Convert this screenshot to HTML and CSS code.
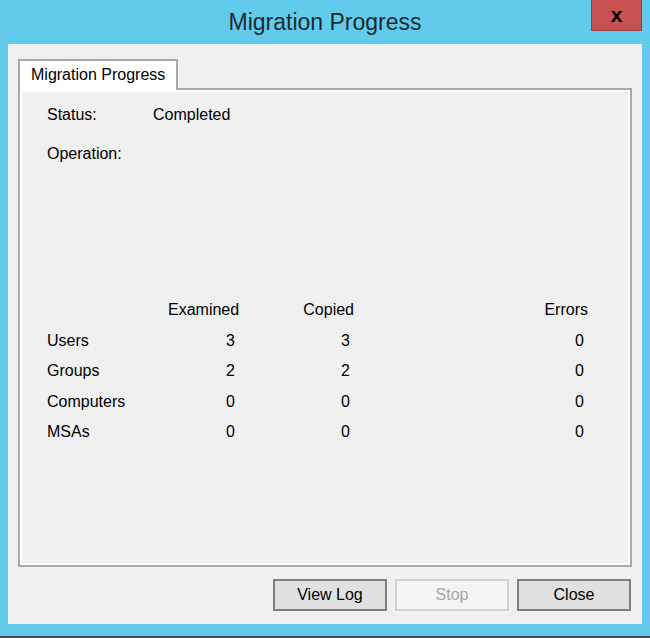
FILE: index.html
```html
<!DOCTYPE html>
<html lang="en">
<head>
    <meta charset="UTF-8">
    <title>Migration Progress</title>
    <link rel="stylesheet" href="styles.css">
</head>
<body>
    <div class="window">
        <div class="titlebar">
            <span class="title">Migration Progress</span>
            <div class="close-btn">x</div>
        </div>

        <div class="client">
            <div class="tabs">
                <div class="tab">Migration Progress</div>
            </div>
            <div class="panel">
                <div class="field">
                    <span class="field-label">Status:</span>
                    <span>Completed</span>
                </div>
                <div class="field operation">
                    <span class="field-label">Operation:</span>
                </div>

                <div class="stats">
                    <span></span>
                    <span class="head">Examined</span>
                    <span class="head">Copied</span>
                    <span class="head">Errors</span>

                    <span>Users</span>
                    <span class="num">3</span>
                    <span class="num">3</span>
                    <span class="num">0</span>

                    <span>Groups</span>
                    <span class="num">2</span>
                    <span class="num">2</span>
                    <span class="num">0</span>

                    <span>Computers</span>
                    <span class="num">0</span>
                    <span class="num">0</span>
                    <span class="num">0</span>

                    <span>MSAs</span>
                    <span class="num">0</span>
                    <span class="num">0</span>
                    <span class="num">0</span>
                </div>
            </div>

            <div class="buttons">
                <button class="btn">View Log</button>
                <button class="btn" disabled>Stop</button>
                <button class="btn">Close</button>
            </div>
        </div>
    </div>
    <div class="taskbar-edge"></div>
</body>
</html>
```

FILE: styles.css
```css
body {
    margin: 0;
    background: #62cbec;
    font-family: "Liberation Sans", Arial, sans-serif;
    font-size: 16px;
    color: #000;
}

.window {
    height: 636px;
    display: flex;
    flex-direction: column;
}

.titlebar {
    height: 44px;
    position: relative;
    display: flex;
    justify-content: center;
}

.title {
    font-size: 23px;
    line-height: 44px;
    color: #1a2a30;
}

.close-btn {
    position: absolute;
    top: 0;
    right: 8px;
    width: 49px;
    height: 30px;
    background: #c75050;
    border: 1px solid #9e3b3b;
    border-top: none;
    font-weight: bold;
    font-size: 21px;
    line-height: 29px;
    text-align: center;
    color: #000;
}

.client {
    margin: 0 8px;
    height: 580px;
    background: #f0f0f0;
    border-top: 1px solid #e8f4f8;
    box-sizing: border-box;
    padding: 14px 10px 0 10px;
    display: flex;
    flex-direction: column;
}

/* onglet */
.tabs {
    display: flex;
    height: 29px;
}

.tab {
    position: relative;
    z-index: 1;
    width: 160px;
    height: 31px;
    box-sizing: border-box;
    background: #fff;
    border: 2px solid #a9a9a9;
    border-bottom: none;
    padding-left: 11px;
    line-height: 28px;
}

.panel {
    height: 479px;
    box-sizing: border-box;
    border: 2px solid #a9a9a9;
    box-shadow: inset 0 0 0 2px #fff;
    padding: 15px 0 0 27px;
}

.field {
    display: flex;
    line-height: 20px;
}

.field-label {
    width: 106px;
}

.operation {
    margin-top: 19px;
}

.stats {
    margin-top: 131px;
    display: grid;
    grid-template-columns: 121px 71px 115px 234px;
    grid-auto-rows: 30.5px;
    align-items: center;
}

.head {
    text-align: right;
}

.num {
    text-align: right;
    padding-right: 4px;
}

.buttons {
    display: flex;
    justify-content: flex-end;
    gap: 8px;
    padding: 12px 1px 0 0;
}

.btn {
    width: 114px;
    height: 32px;
    font-family: "Liberation Sans", Arial, sans-serif;
    font-size: 16px;
    color: #000;
    background: #e1e1e1;
    border: 2px solid #7f7f7f;
    padding: 0;
}

.btn:disabled {
    background: #f4f4f4;
    border-color: #d0d0d0;
    color: #a6a6a6;
}

.taskbar-edge {
    height: 2px;
    background: #4a4a4a;
}
```
